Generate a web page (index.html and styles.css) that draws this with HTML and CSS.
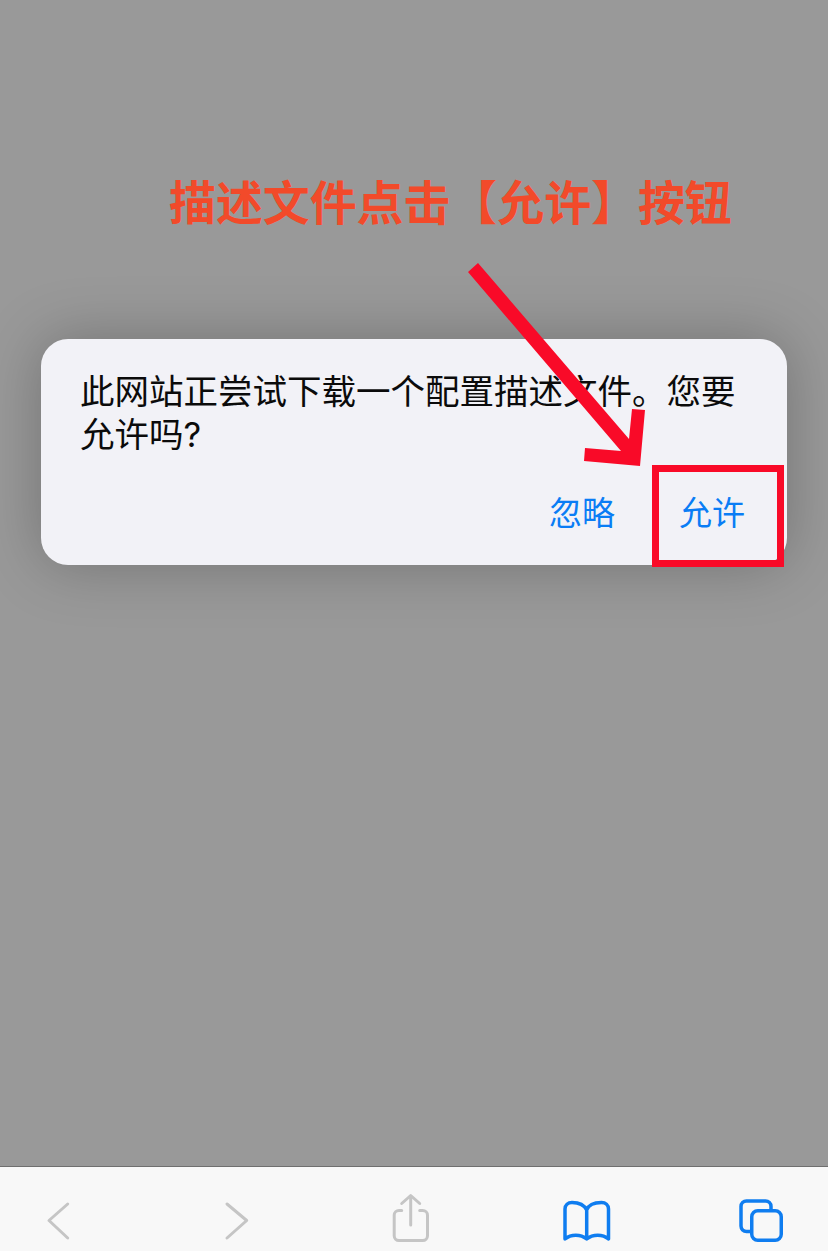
FILE: index.html
```html
<!DOCTYPE html>
<html lang="zh-CN">
<head>
<meta charset="utf-8">
<title>允许描述文件</title>
<link rel="stylesheet" href="styles.css">
</head>
<body>
<div class="page">
  <main class="content">
    <section class="dialog">
      <p class="message">此网站正尝试下载一个配置描述文件。您要允许吗?</p>
      <div class="actions">
        <span class="action">忽略</span>
        <span class="action">允许</span>
      </div>
    </section>
    <div class="note">描述文件点击【允许】按钮</div>
    <svg class="arrow" viewBox="0 0 828 1166" aria-hidden="true">
      <polygon points="468,272 478,263 629,439 632,409 645,410 640,466 584,461 585,448 621,451"/>
    </svg>
    <div class="highlight"></div>
  </main>
  <nav class="toolbar">
    <svg class="icon muted" viewBox="0 0 60 66"><path d="M39.700 19 21 35.500l18.700 17.500"/></svg>
    <svg class="icon muted" viewBox="0 0 60 66"><path d="M20 19l19.700 16.500L20 53"/></svg>
    <svg class="icon muted" viewBox="0 0 60 66"><path d="M20.700 25.500H18a4.800 4.800 0 0 0-4.800 4.800v20.400a4.800 4.800 0 0 0 4.800 4.800h23.700a4.800 4.800 0 0 0 4.800-4.800V30.300a4.800 4.800 0 0 0-4.800-4.800h-3M29.700 40V11M20.700 18.500l9-8 9 8"/></svg>
    <svg class="icon active" viewBox="0 0 60 66"><path d="M29.700 25C27 19.500 21 17.500 15 17.500c-4 0-7 2.500-7 6.500v30c6-5 15.500-5 21.700 0 6.200-5 15.800-5 21.800 0V24c0-4-3-6.500-7-6.500-6.500 0-12.800 2-14.800 7.500v29"/></svg>
    <svg class="icon active" viewBox="0 0 60 66"><rect x="20.750" y="25.750" width="29.500" height="29.500" rx="6"/><path d="M20 46.500h-4.500a5.500 5.500 0 0 1-5.500-5.500V21.500a5.500 5.500 0 0 1 5.500-5.500h19a5.500 5.500 0 0 1 5.500 5.500V25"/></svg>
  </nav>
</div>
</body>
</html>
```

FILE: styles.css
```css
html, body {
  margin: 0;
  padding: 0;
}

body {
  font-family: "Inter", "Noto Sans CJK SC", sans-serif;
  background: #999999;
}

.page {
  display: flex;
  flex-direction: column;
  width: 828px;
  height: 1251px;
  overflow: hidden;
}

.content {
  position: relative;
  flex: 0 0 1166px;
  box-sizing: border-box;
  padding: 339px 41px 0;
  background: #999999;
}

.dialog {
  box-sizing: border-box;
  height: 226px;
  padding: 31px 40px 30px 39px;
  border-radius: 27px;
  background: #f2f2f7;
  box-shadow: 0 0 60px rgba(0, 0, 0, 0.25);
}

.message {
  margin: 0;
  font-size: 34.500px;
  line-height: 43px;
  color: #0b0b0b;
}

.actions {
  display: flex;
  justify-content: flex-end;
  gap: 64px;
  margin-top: 35px;
  margin-right: 2px;
  font-size: 33px;
  line-height: 44px;
  color: #0a7df5;
}

.note {
  position: absolute;
  left: 169px;
  top: 169px;
  font-size: 46.900px;
  line-height: 68px;
  font-weight: 700;
  white-space: nowrap;
  color: #f24a2a;
}

.arrow {
  position: absolute;
  left: 0;
  top: 0;
  width: 828px;
  height: 1166px;
  fill: #f90a28;
}

.highlight {
  position: absolute;
  left: 652px;
  top: 465px;
  box-sizing: border-box;
  width: 132px;
  height: 102px;
  border: 7px solid #f90a28;
}

.toolbar {
  flex: 1;
  display: grid;
  grid-template-columns: 179px 174px 176px 174px 60px;
  box-sizing: border-box;
  padding: 18px 0 0 28px;
  background: #f8f8f8;
  border-top: 1px solid #6f6f6f;
}

.icon {
  display: block;
  width: 60px;
  height: 66px;
  fill: none;
  stroke-width: 3;
  stroke-linecap: round;
  stroke-linejoin: round;
}

.muted {
  stroke: #c5c5c5;
}

.active {
  stroke: #0f7df0;
  stroke-width: 3.500;
}
```
